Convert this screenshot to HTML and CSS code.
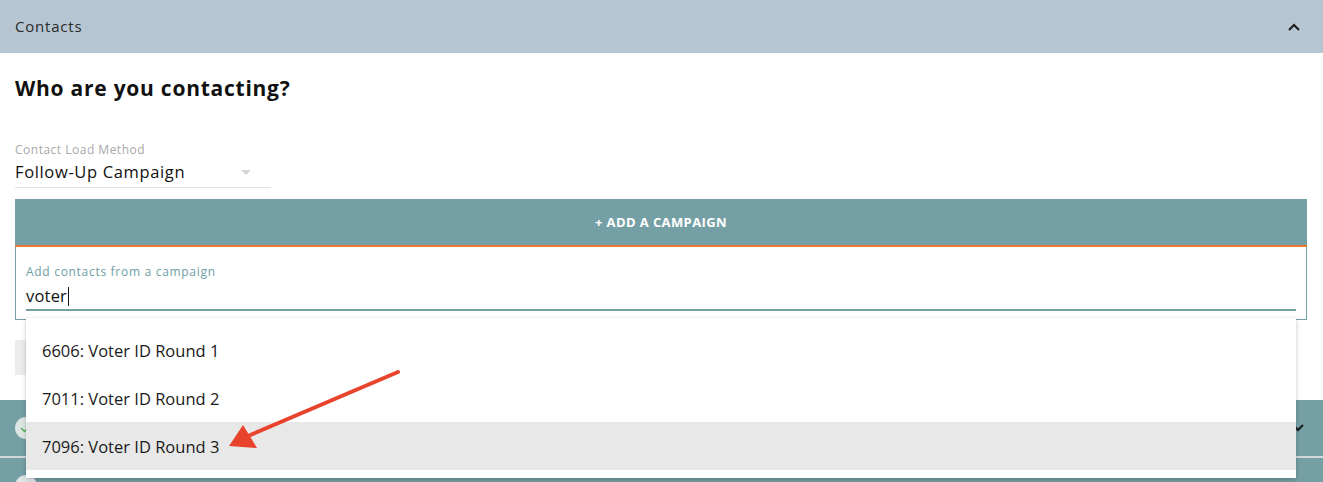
FILE: index.html
```html
<!DOCTYPE html>
<html lang="en">
<head>
<meta charset="utf-8">
<title>Contacts</title>
<link rel="stylesheet" href="styles.css">
</head>
<body>
<div class="page">
  <div class="section-header">
    <span class="section-title">Contacts</span>
    <svg class="chev" width="14" height="10" viewBox="0 0 14 10"><path d="M2 8 L7 3 L12 8" fill="none" stroke="#1a1a1a" stroke-width="2"/></svg>
  </div>
  <div class="content">
    <h2 class="heading">Who are you contacting?</h2>
    <div class="select">
      <div class="select-label">Contact Load Method</div>
      <div class="select-value">
        <span>Follow-Up Campaign</span>
        <span class="tri"></span>
      </div>
    </div>
    <div class="campaign">
      <div class="add-btn">+ ADD A CAMPAIGN</div>
      <div class="field-box">
        <div class="field">
          <div class="field-label">Add contacts from a campaign</div>
          <div class="field-input">voter<span class="caret"></span></div>
        </div>
        <div class="menu">
          <div class="item">6606: Voter ID Round 1</div>
          <div class="item">7011: Voter ID Round 2</div>
          <div class="item active">7096: Voter ID Round 3</div>
        </div>
      </div>
    </div>
    <div class="gray-btn"></div>
  </div>
  <div class="teal-rows">
    <div class="trow">
      <span class="circle"><svg width="20" height="20" viewBox="0 0 20 20"><path d="M5 10 L8.5 13.5 L15 7" fill="none" stroke="#4caf50" stroke-width="1.5"/></svg></span>
      <svg class="chev-down" width="14" height="10" viewBox="0 0 14 10"><path d="M2 2 L7 7 L12 2" fill="none" stroke="#1a1a1a" stroke-width="2"/></svg>
    </div>
    <div class="trow">
      <span class="circle"></span>
    </div>
  </div>
  <svg class="arrow" width="200" height="100" viewBox="0 0 200 100">
    <line x1="178" y1="4" x2="28" y2="68" stroke="#e8432c" stroke-width="4" stroke-linecap="round"/>
    <polygon points="9,78 23,57 37,80" fill="#e8432c"/>
  </svg>
</div>
</body>
</html>
```

FILE: styles.css
```css
* { box-sizing: border-box; }
html, body { margin: 0; padding: 0; background: #fff; }
body { font-family: "Open Sans", "Noto Sans", sans-serif; color: #1a1a1a; }
.page { position: relative; width: 1323px; height: 482px; overflow: hidden; }

.section-header {
  height: 53px;
  background: #b5c5d2;
  display: flex;
  align-items: center;
  justify-content: space-between;
  padding: 0 22px 0 15px;
}
.section-title { font-size: 15px; color: #2b2b2b; letter-spacing: 0.8px; margin-top: -1px; }

.content { padding: 0 16px 0 15px; }
.heading {
  margin: 0;
  padding-top: 22px;
  font-size: 21px;
  font-weight: 700;
  line-height: 26px;
  color: #111;
  letter-spacing: 0.75px;
}

.select { width: 256px; margin-top: 42px; border-bottom: 1px solid #e2e2e2; padding-bottom: 3px; }
.select-label { font-size: 12px; color: #a8a8a8; line-height: 14px; letter-spacing: 0.5px; }
.select-value { display: flex; justify-content: space-between; align-items: center; font-size: 16.5px; line-height: 24px; color: #111; padding-right: 20px; margin-top: 3px; letter-spacing: 0.65px; }
.tri { width: 0; height: 0; border-left: 5px solid transparent; border-right: 5px solid transparent; border-top: 5px solid #d6d6d6; }

.campaign { margin-top: 11px; }
.add-btn {
  height: 48px;
  background: #749fa4;
  border-bottom: 2px solid #ea7a2e;
  color: #fff;
  font-size: 13px;
  font-weight: 700;
  display: flex;
  align-items: center;
  justify-content: center;
  letter-spacing: 0.4px;
}
.field-box {
  position: relative;
  border: 1px solid #749fa4;
  border-top: none;
  height: 73px;
  padding: 0 10px;
}
.field { padding-top: 18px; }
.field-label { font-size: 12px; color: #6e9ea3; line-height: 14px; letter-spacing: 0.7px; }
.field-input {
  font-size: 16.5px;
  line-height: 22px;
  margin-top: 6px;
  padding-bottom: 2px;
  border-bottom: 2px solid #749fa4;
  color: #111;
  display: flex;
  align-items: center;
  letter-spacing: 0.2px;
}
.caret { display: inline-block; width: 1px; height: 19px; background: #111; margin-left: 1px; }

.menu {
  position: absolute;
  left: 10px;
  right: 10px;
  top: 71px;
  background: #fff;
  padding: 8px 0;
  box-shadow: 0 2px 5px rgba(0,0,0,0.18), 0 0 2px rgba(0,0,0,0.08);
  z-index: 5;
}
.item { height: 48px; display: flex; align-items: center; padding-left: 16px; font-size: 16.5px; color: #1a1a1a; }
.item.active { background: #e8e8e8; }

.gray-btn { width: 120px; height: 35px; background: #ececec; margin-top: 20px; }

.teal-rows { margin-top: 25px; background: #749fa4; }
.trow { height: 58px; border-bottom: 2px solid #d2d9db; display: flex; align-items: center; justify-content: space-between; padding: 0 18px 0 15px; }
.circle { width: 22px; height: 22px; border-radius: 50%; background: #dfe4e4; display: flex; align-items: center; justify-content: center; }

.arrow { position: absolute; left: 220px; top: 368px; z-index: 10; }
```
